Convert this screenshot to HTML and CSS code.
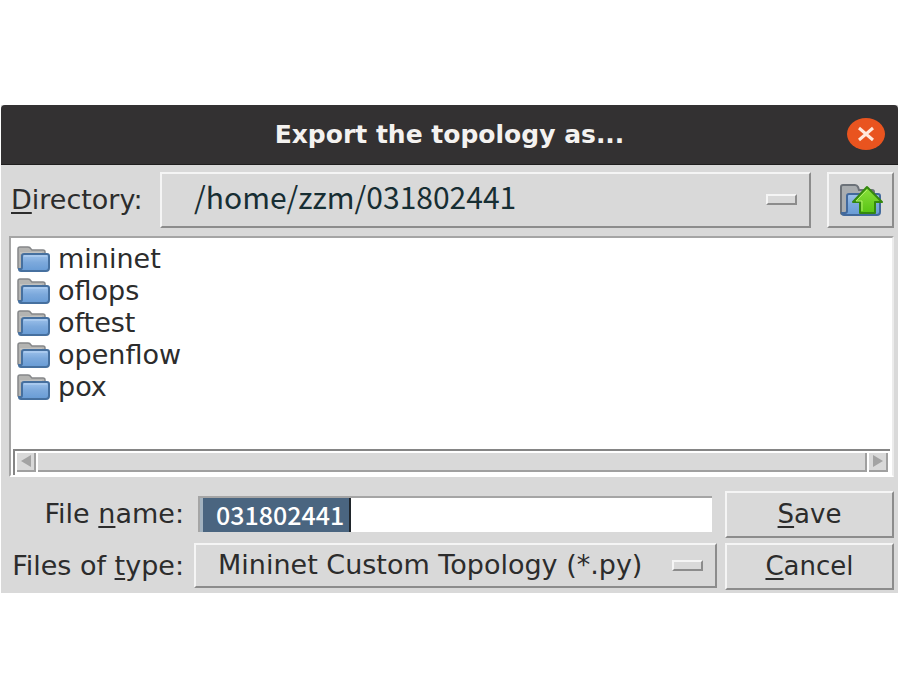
FILE: index.html
```html
<!DOCTYPE html>
<html lang="en">

<head>
    <meta charset="UTF-8">
    <meta name="viewport" content="width=device-width, initial-scale=1.0">
    <title>Export the topology as...</title>
    <link rel="stylesheet" href="styles.css">
</head>

<body>
    <!-- Folder icon shared by the list rows -->
    <svg class="defs" width="0" height="0" aria-hidden="true">
        <defs>
            <linearGradient id="blue" x1="0" y1="0" x2="0" y2="1">
                <stop offset="0" stop-color="#9fc3ec" />
                <stop offset="0.5" stop-color="#7ca9dc" />
                <stop offset="1" stop-color="#689bd5" />
            </linearGradient>
            <linearGradient id="green" x1="0" y1="0" x2="0" y2="1">
                <stop offset="0" stop-color="#8be03c" />
                <stop offset="1" stop-color="#58c414" />
            </linearGradient>
            <symbol id="folder" viewBox="0 0 34 26">
                <path d="M2 22V3q0-2 2-2h8q2 0 3 2l1 1h11q2 0 2 2v17H4q-2 0-2-1z" fill="#b4b4b2" stroke="#858789" stroke-width="1.500" />
                <path d="M4 7h22" stroke="#d0d0ce" />
                <path d="M8 8h23q2 0 2 2v12q0 3-3 3H5q-2 0-2-2h2q1 0 1-2V10q0-2 2-2z" fill="url(#blue)" stroke="#46709f" stroke-width="2" />
                <path d="M8 10h23" stroke="#b9d5f4" />
            </symbol>
        </defs>
    </svg>

    <main class="dialog">
        <header class="titlebar">
            <h1>Export the topology as...</h1>
            <button class="close" aria-label="Close">
                <svg width="18" height="16" viewBox="0 0 18 16">
                    <path d="M2 2l14 12M16 2L2 14" stroke="#ffe9dc" stroke-width="3" />
                </svg>
            </button>
        </header>

        <form class="content">
            <div class="directory">
                <label for="directory"><u>D</u>irectory:</label>
                <div class="dropdown">
                    <select id="directory" class="path">
                        <option>/home/zzm/031802441</option>
                    </select>
                    <span class="indicator"></span>
                </div>
                <button type="button" class="raised up" aria-label="Parent directory">
                    <svg width="44" height="34" viewBox="0 0 44 34">
                        <path d="M2 30V4q0-2 2-2h12q2 0 3 2l1 3h13q2 0 2 2v22H4q-2 0-2-1z" fill="#a9adb0" stroke="#6c7279" stroke-width="2" />
                        <path d="M10 11h29q2 0 2 2v16q0 3-3 3H5q-2 0-2-2h3q2 0 2-2V13q0-2 2-2z" fill="url(#blue)" stroke="#42699c" stroke-width="2" />
                        <path d="M28 4L43 19H36V30H21V19H14z" fill="url(#green)" stroke="#34880f" stroke-width="2" stroke-linejoin="round" />
                        <path d="M28 7L17 18H23V28" fill="none" stroke="#b0f06b" stroke-width="1" />
                    </svg>
                </button>
            </div>

            <div class="browser">
                <ul class="files">
                    <li><svg><use href="#folder" /></svg>mininet</li>
                    <li><svg><use href="#folder" /></svg>oflops</li>
                    <li><svg><use href="#folder" /></svg>oftest</li>
                    <li><svg><use href="#folder" /></svg>openflow</li>
                    <li><svg><use href="#folder" /></svg>pox</li>
                </ul>
                <div class="scrollbar">
                    <button type="button" aria-label="Scroll left">
                        <svg width="10" height="12" viewBox="0 0 10 12"><path d="M10 0v12L0 6z" fill="#a3a3a3" /></svg>
                    </button>
                    <div class="thumb"></div>
                    <button type="button" aria-label="Scroll right">
                        <svg width="10" height="12" viewBox="0 0 10 12"><path d="M0 0v12l10-6z" fill="#a3a3a3" /></svg>
                    </button>
                </div>
            </div>

            <div class="fields">
                <label for="filename">File <u>n</u>ame:</label>
                <input id="filename" class="filename" type="text" value="031802441">
                <button type="button" class="raised"><span><u>S</u>ave</span></button>

                <label for="filetype">Files of <u>t</u>ype:</label>
                <div class="dropdown">
                    <select id="filetype">
                        <option>Mininet Custom Topology (*.py)</option>
                    </select>
                    <span class="indicator"></span>
                </div>
                <button type="button" class="raised"><span><u>C</u>ancel</span></button>
            </div>
        </form>
    </main>
</body>

</html>
```

FILE: styles.css
```css
* {
    box-sizing: border-box;
}

body {
    margin: 0;
    min-height: 100vh;
    display: flex;
    flex-direction: column;
    justify-content: center;
    background: #fff;
    color: #2c2c2c;
    font-family: "DejaVu Sans", sans-serif;
    font-size: 27px;
    line-height: 32px;
}

.defs {
    position: absolute;
}

button,
input,
select {
    margin: 0;
    padding: 0;
    border: none;
    border-radius: 0;
    background: #d9d9d9;
    color: inherit;
    font: inherit;
}

u {
    text-decoration-thickness: 2px;
    text-underline-offset: 3px;
    text-decoration-skip-ink: none;
}

.dialog {
    margin-left: 1px;
    background: #d9d9d9;
}

.titlebar {
    display: grid;
    grid-template-columns: 1fr auto 1fr;
    align-items: center;
    height: 60px;
    padding: 0 13px;
    background: #333132;
    border-bottom: 1px solid #1f1e1e;
    border-radius: 4px 4px 0 0;
}

.titlebar h1 {
    grid-column: 2;
    margin: 0;
    padding-top: 2px;
    color: #f4f2f0;
    font-size: 25px;
    font-weight: bold;
}

.close {
    display: flex;
    justify-content: center;
    align-items: center;
    justify-self: end;
    width: 38px;
    height: 32px;
    border-radius: 50%;
    background: #e9541f;
}

.content {
    padding: 7px 4px 3px 8px;
}

.directory {
    display: flex;
    align-items: stretch;
    height: 56px;
}

.directory label {
    width: 151px;
    padding-left: 2px;
    align-self: center;
}

.dropdown,
.raised {
    border: 2px solid;
    border-color: #f5f5f5 #8c8c8c #8c8c8c #f5f5f5;
}

.raised {
    font-size: 26px;
}

.dropdown {
    display: flex;
    flex: 1;
    align-items: center;
    min-width: 0;
    padding-right: 12px;
}

.dropdown select {
    flex: 1;
    min-width: 0;
    height: 100%;
    padding-left: 22px;
    appearance: none;
}

.dropdown .path {
    padding: 0 0 8px 32px;
    color: #172e33;
    font-family: "Noto Sans CJK SC", sans-serif;
    font-size: 30px;
    line-height: 44px;
}

.indicator {
    width: 31px;
    height: 11px;
    border: 2px solid;
    border-color: #f5f5f5 #8c8c8c #8c8c8c #f5f5f5;
}

.up {
    display: flex;
    justify-content: center;
    align-items: center;
    width: 67px;
    margin-left: 16px;
}

.browser {
    display: flex;
    flex-direction: column;
    height: 241px;
    margin-top: 8px;
    padding: 4px 2px 0;
    background: #fff;
    border: 2px solid;
    border-color: #a5a5a5 #ececec #fff #a5a5a5;
}

.files {
    flex: 1;
    margin: 0;
    padding: 1px 3px 0;
    list-style: none;
}

.files li {
    display: flex;
    align-items: center;
    gap: 8px;
}

.files svg {
    width: 34px;
    height: 26px;
}

.scrollbar {
    display: flex;
    gap: 2px;
    height: 26px;
    padding: 2px 2px 3px;
    border-top: 2px solid #858585;
    border-left: 2px solid #858585;
}

.scrollbar button {
    display: flex;
    justify-content: center;
    align-items: center;
    width: 19px;
}

.scrollbar button,
.thumb {
    border: solid #a0a0a0;
    border-width: 0 2px 2px 0;
    background: #d9d9d9;
}

.thumb {
    flex: 1;
}

.fields {
    display: grid;
    grid-template-columns: 175px 1fr 169px;
    grid-template-rows: 47px 47px;
    column-gap: 8px;
    row-gap: 5px;
    align-items: stretch;
    margin-top: 14px;
}

.fields label {
    align-self: center;
    justify-self: end;
}

.filename {
    align-self: center;
    width: auto;
    min-width: 0;
    height: 36px;
    margin: 0 5px 0 6px;
    padding: 0 0 3px 16px;
    border: solid #a5a5a5;
    border-width: 2px 0 0 2px;
    color: #fff;
    font-family: "Noto Sans CJK SC", sans-serif;
    font-size: 25px;
    font-weight: 500;
    background: linear-gradient(90deg, #a3b3c0 3px, #4a6580 3px, #4a6580 149px, #20262c 149px, #20262c 151px, #fff 151px);
}

.fields .dropdown {
    margin: 0 0 2px 2px;
}
```
